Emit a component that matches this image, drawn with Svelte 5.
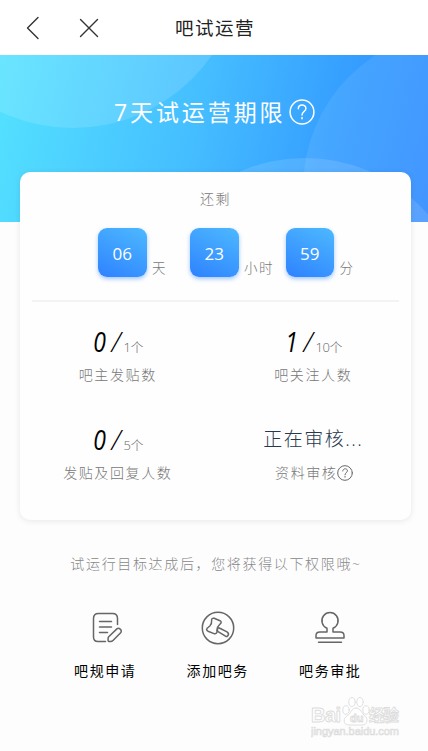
<script lang="ts">
	interface Stat {
		value: string;
		unit?: string;
		label: string;
		help?: boolean;
	}

	const countdown = [
		{ value: '06', unit: '天' },
		{ value: '23', unit: '小时' },
		{ value: '59', unit: '分' }
	];

	const stats: Stat[] = [
		{ value: '0', unit: '1个', label: '吧主发贴数' },
		{ value: '1', unit: '10个', label: '吧关注人数' },
		{ value: '0', unit: '5个', label: '发贴及回复人数' },
		{ value: '正在审核', label: '资料审核', help: true }
	];

	const actions = [
		{ icon: 'rules', label: '吧规申请' },
		{ icon: 'gavel', label: '添加吧务' },
		{ icon: 'stamp', label: '吧务审批' }
	];
</script>

{#snippet helpIcon()}
	<svg class="help" viewBox="0 0 26 26" aria-label="help">
		<circle cx="13" cy="13" r="11.9" />
		<path d="M9.3 9.8c0-5 7.6-4.8 7.6-.4 0 3-3.9 3.2-3.9 6.6M13 18.6v1.2" />
	</svg>
{/snippet}

<div class="page">
	<header class="navbar">
		<svg class="back" viewBox="0 0 14 24"><path d="M12 1.5 1.5 12 12 22.5" /></svg>
		<svg class="close" viewBox="0 0 20 20"><path d="m1.5 1.5 17 17M18.5 1.5l-17 17" /></svg>
		<h1>吧试运营</h1>
	</header>

	<section class="hero">
		<svg class="bubbles" viewBox="0 0 428 167">
			<circle cx="73" cy="-96" r="169" opacity="0.13" />
			<circle cx="461" cy="133" r="158" opacity="0.08" />
			<circle cx="305" cy="265" r="162" opacity="0.12" />
		</svg>
		<h2><span>7天试运营期限</span>{@render helpIcon()}</h2>
	</section>

	<main class="card">
		<p class="remain">还剩</p>
		<div class="countdown">
			{#each countdown as { value, unit }}
				<div class="time">
					<span class="tile">{value}</span>
					<span class="unit">{unit}</span>
				</div>
			{/each}
		</div>
		<hr />
		<div class="stats">
			{#each stats as { value, unit, label, help }}
				<div class="stat">
					{#if unit}
						<p class="value">
							<b>{value}</b>
							<i>/</i>
							<small>{unit}</small>
						</p>
					{:else}
						<p class="value pending">{value}<span>...</span></p>
					{/if}
					<p class="label">
						<span>{label}</span>
						{#if help}{@render helpIcon()}{/if}
					</p>
				</div>
			{/each}
		</div>
	</main>

	<p class="hint">试运行目标达成后，您将获得以下权限哦~</p>

	<nav class="actions">
		{#each actions as { icon, label }}
			<div class="action">
				<svg viewBox="0 0 34 34">
					{#if icon === 'rules'}
						<g transform="translate(2.5 0)">
							<path d="M27 13.5V7.5Q27 2.5 22 2.5H8Q3 2.5 3 7.5V26Q3 30.5 7.5 30.5H15" />
							<path d="M9 10.5H21M9 16H21M9 21.5H17" />
							<path d="M18.2 25.8 26.4 17.9Q28 16.6 29.7 18.1T30.4 21.5L22.5 29.6Q21.5 30.6 20 30.6H18.8Q17.7 30.6 17.6 29.4V27.6Q17.6 26.5 18.2 25.8Z" />
						</g>
					{:else if icon === 'gavel'}
						<circle cx="17" cy="17" r="15.7" />
						<path d="M13.2 7.3 19 9.7Q20.8 10.7 19.8 12.3L18.2 14Q15.6 16.4 16 19L16 21.3Q15 23.4 13 22.6L7 20.2Q4.7 18.9 6.2 17.2L8.8 15Q11 13 10.6 9.5Q10.6 6.7 13.2 7.3Z" />
						<path d="M18.3 17 26 20.8Q28.2 22.2 27.2 24.2T24.5 25.1L17.1 20.6Q15.8 19.6 16.6 18T18.3 17Z" />
					{:else}
						<path d="M14 21V17.2A8.1 8.1 0 1 1 20 17.2V21H27Q31 21 31 24.5V27H3V24.5Q3 21 7 21Z" />
						<path d="M5.5 31.2H28.5" />
					{/if}
				</svg>
				<span>{label}</span>
			</div>
		{/each}
	</nav>

	<div class="watermark">
		<svg viewBox="0 0 92 44">
			<text x="0" y="25" font-size="20" textLength="30">Bai</text>
			<ellipse cx="35" cy="13" rx="3.2" ry="4.2" />
			<ellipse cx="41" cy="5" rx="3.2" ry="4.5" />
			<ellipse cx="49" cy="5" rx="3.2" ry="4.5" />
			<ellipse cx="55" cy="13" rx="3.2" ry="4.2" />
			<path d="M45 11c5 0 6 6 9 8s3 9-3 9H38c-6 0-6-7-2-9s4-8 9-8Z" />
			<text x="39" y="25" font-size="11">du</text>
			<text x="58" y="24" font-size="15.5" textLength="30">经验</text>
			<text class="url" x="0" y="38" font-size="11" textLength="88">jingyan.baidu.com</text>
		</svg>
	</div>
</div>

<style>
	:global(body) {
		margin: 0;
		background: #fdfdfd;
	}

	.page {
		position: relative;
		width: 428px;
		height: 751px;
		overflow: hidden;
		font-family: 'Open Sans', 'Noto Sans CJK SC', sans-serif;
		font-weight: 300;
		color: #777;
		background: #fdfdfd;
	}

	h1,
	h2,
	p {
		margin: 0;
		font-weight: 300;
	}

	svg {
		display: block;
		fill: none;
		stroke: currentColor;
		stroke-linecap: round;
		stroke-linejoin: round;
	}

	.navbar {
		display: flex;
		align-items: center;
		height: 55px;
		padding-left: 26px;
		box-sizing: border-box;
		color: #333;
		background: #fff;
	}

	.back {
		width: 14px;
		height: 24px;
		stroke-width: 1.4;
	}

	.close {
		width: 20px;
		height: 20px;
		margin-left: 39px;
		stroke-width: 1.4;
	}

	h1 {
		margin-left: 76px;
		font-size: 18.5px;
		font-weight: 400;
		line-height: 54px;
		letter-spacing: 1.5px;
		color: #222;
	}

	.hero {
		position: relative;
		height: 167px;
		background: linear-gradient(103deg, #54e2ff 0%, #45beff 45%, #369fff 75%, #338dff 100%);
	}

	.bubbles {
		position: absolute;
		inset: 0;
		width: 428px;
		height: 167px;
		fill: #fff;
		stroke: none;
	}

	.hero h2 {
		position: relative;
		display: flex;
		align-items: center;
		gap: 4px;
		height: 115px;
		padding-left: 114px;
		font-size: 23px;
		font-weight: 400;
		letter-spacing: 2.9px;
		color: #fff;
	}

	.hero h2 span {
		margin-top: -4px;
	}

	.hero .help {
		width: 26px;
		height: 26px;
		margin-top: -1px;
		stroke-width: 1.5;
	}

	.card {
		position: relative;
		width: 391px;
		height: 348px;
		margin: -50px 0 0 20px;
		box-sizing: border-box;
		padding-top: 16px;
		border-radius: 10px;
		background: #fefefe;
		box-shadow: 0 1px 6px rgba(0, 0, 0, 0.09);
	}

	.remain {
		height: 22px;
		font-size: 14px;
		line-height: 21px;
		letter-spacing: 1.5px;
		text-align: center;
	}

	.countdown {
		display: grid;
		grid-template-columns: 92px 95.5px auto;
		margin: 18px 0 0 78px;
	}

	.time {
		display: flex;
		align-items: flex-end;
		gap: 5.5px;
	}

	.tile {
		width: 48.5px;
		height: 48.5px;
		border-radius: 9px;
		font-size: 17px;
		font-weight: 400;
		line-height: 51px;
		text-align: center;
		color: #fff;
		background: linear-gradient(205deg, #4db9ff, #2e82ff);
		box-shadow: 0 2px 4px rgba(46, 130, 255, 0.45);
	}

	.unit {
		font-size: 13.5px;
		line-height: 18px;
		letter-spacing: 1.5px;
	}

	hr {
		height: 2px;
		margin: 23.5px 12px 0;
		border: 0;
		background: #f3f3f3;
	}

	.stats {
		display: grid;
		grid-template-columns: 1fr 1fr;
		grid-auto-rows: 98px;
		padding-top: 22px;
	}

	.stat {
		display: flex;
		flex-direction: column;
		align-items: center;
	}

	.value {
		display: flex;
		align-items: baseline;
		height: 37px;
		line-height: 34px;
		font-size: 27px;
		color: #000;
	}

	.value b {
		width: 15px;
		font-weight: 500;
		font-style: italic;
		text-align: center;
		transform: scaleX(0.85);
	}

	.value i {
		margin: 0 3px 0 4px;
		font-size: 28px;
	}

	.value small {
		font-size: 13px;
		letter-spacing: -0.4px;
		color: #666;
	}

	.pending {
		font-size: 19px;
		letter-spacing: 1.5px;
		color: #26394d;
	}

	.label {
		display: flex;
		align-items: center;
		height: 26px;
		font-size: 14px;
		letter-spacing: 1.6px;
	}

	.label .help {
		width: 16px;
		height: 16px;
		margin: 1px -2px 0 0;
		color: #666;
		stroke-width: 1.6;
	}

	.hint {
		margin-top: 32px;
		font-size: 14px;
		line-height: 24px;
		letter-spacing: 1.65px;
		text-align: center;
		padding-left: 4px;
		color: #888;
	}

	.actions {
		display: grid;
		grid-template-columns: repeat(3, 112.5px);
		margin: 35px 0 0 49px;
	}

	.action {
		display: flex;
		flex-direction: column;
		align-items: center;
		gap: 14px;
		color: #000;
		font-size: 14px;
		font-weight: 400;
		line-height: 24px;
		letter-spacing: 1.6px;
	}

	.action svg {
		width: 34px;
		height: 34px;
		color: #666;
		stroke-width: 1.5;
	}

	.watermark {
		position: absolute;
		right: 25px;
		bottom: 10px;
	}

	.watermark svg {
		width: 92px;
		height: 44px;
		fill: #fff;
		stroke: #dcdcdc;
		stroke-width: 0.9;
		font-family: 'Liberation Sans', 'Noto Sans CJK SC', sans-serif;
		font-weight: 700;
	}

	.watermark .url {
		font-weight: 400;
		stroke-width: 0.7;
	}
</style>
